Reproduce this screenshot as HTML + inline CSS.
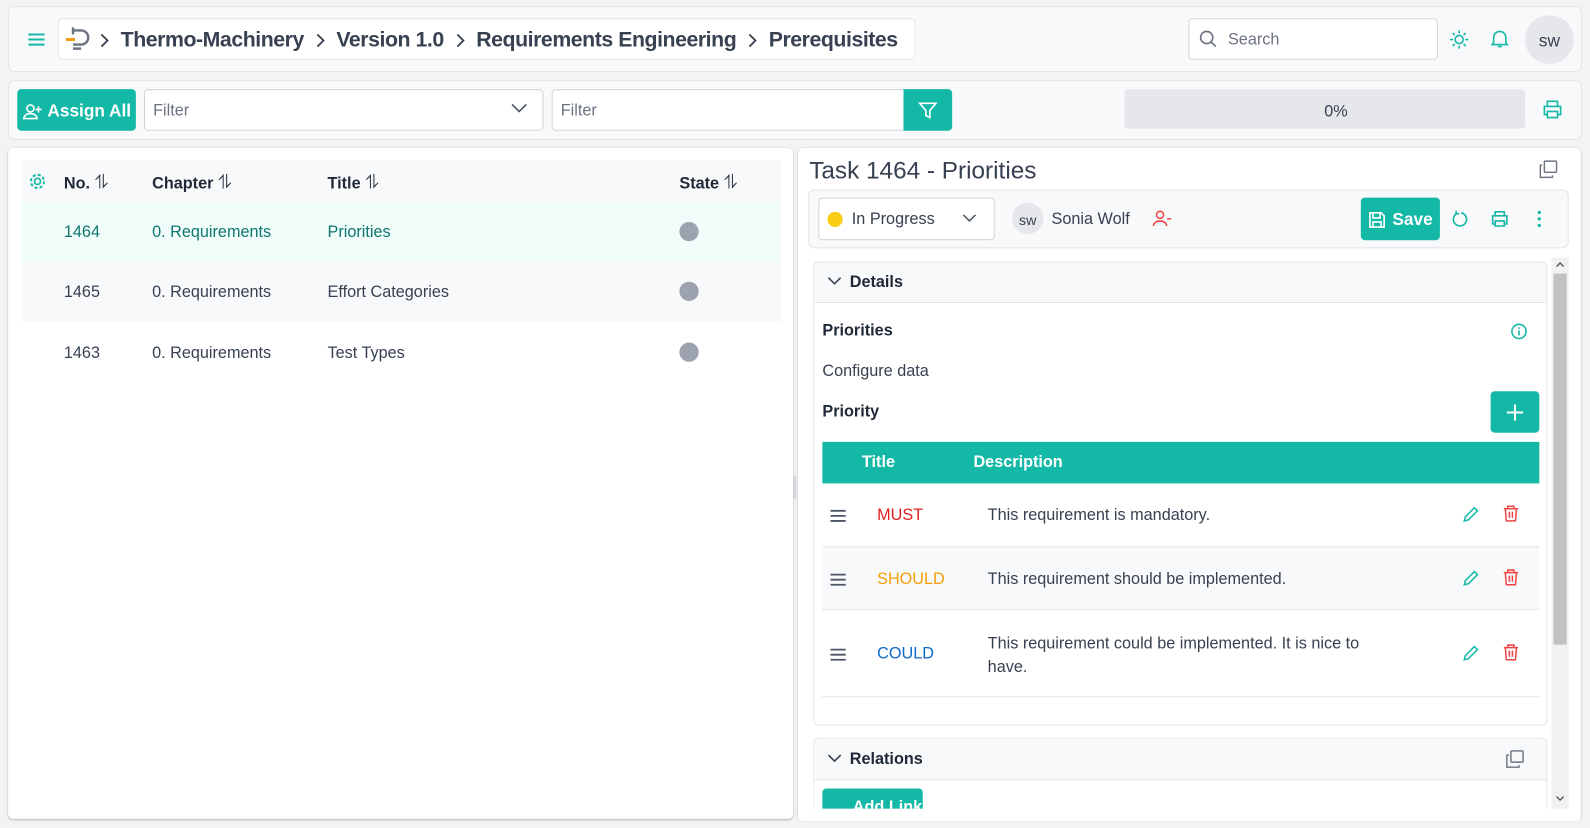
<!DOCTYPE html>
<html><head><meta charset="utf-8"><style>
*{box-sizing:border-box;margin:0;padding:0}
html,body{width:1590px;height:828px;overflow:hidden;background:#f2f3f5}
body{font-family:"Liberation Sans",sans-serif;color:#374151}
#w{position:absolute;left:0;top:0;width:1568px;height:817px;transform:scale(1.01403,1.01346);transform-origin:0 0}
.a{position:absolute}
.card{position:absolute;background:#f8f9fa;border:1px solid #e3e5e8;border-radius:6px}
.inp{position:absolute;background:#fff;border:1px solid #d1d5db;border-radius:4px;color:#6b7280;font-size:16px;padding-left:8px;padding-top:2px;display:flex;align-items:center}
.btn{position:absolute;background:#14b8a6;color:#fff;border-radius:4px;font-weight:bold;display:flex;align-items:center;justify-content:center}
.th{font-weight:bold;font-size:16px;color:#1f2937}
.td{font-size:16px;color:#374151}
.srt{font-weight:normal;font-size:19px}
svg{display:block}
.bcw{position:absolute;left:98px;top:25px;height:30px;display:flex;align-items:center;gap:11px;font-size:21px;font-weight:bold;color:#374151;white-space:nowrap;letter-spacing:-0.45px}
</style></head><body><div id="w">
<div class="card" style="left:8px;top:6px;width:1552px;height:65px"></div>
<svg class="a" style="left:27px;top:31px" width="18" height="16"><path d="M1 3h16M1 8h16M1 13h16" stroke="#14b8a6" stroke-width="2"/></svg>
<div class="a" style="left:57px;top:18px;width:846px;height:41px;background:#fff;border:1px solid #e3e5e8;border-radius:5px"></div>
<svg class="a" style="left:63px;top:26px" width="26" height="26"><path d="M9 4h8a7 7 0 0 1 0 14H9M9 22h8" stroke="#6b7280" stroke-width="2.4" fill="none"/><path d="M9 1v7" stroke="#6b7280" stroke-width="2.4"/><path d="M2 13h9" stroke="#f59e0b" stroke-width="3"/></svg>
<div class="bcw">
<svg width="10" height="16"><path d="M2 2l6 6-6 6" stroke="#374151" stroke-width="1.8" fill="none"/></svg><span>Thermo-Machinery</span>
<svg width="10" height="16"><path d="M2 2l6 6-6 6" stroke="#374151" stroke-width="1.8" fill="none"/></svg><span>Version 1.0</span>
<svg width="10" height="16"><path d="M2 2l6 6-6 6" stroke="#374151" stroke-width="1.8" fill="none"/></svg><span>Requirements Engineering</span>
<svg width="10" height="16"><path d="M2 2l6 6-6 6" stroke="#374151" stroke-width="1.8" fill="none"/></svg><span>Prerequisites</span>
</div>
<div class="inp" style="left:1172px;top:18px;width:246px;height:41px;padding-left:38px">Search</div>
<svg class="a" style="left:1182px;top:29px" width="20" height="20"><circle cx="8" cy="8" r="6" stroke="#6b7280" stroke-width="1.6" fill="none"/><path d="M12.5 12.5L17 17" stroke="#6b7280" stroke-width="1.6"/></svg>
<svg class="a" style="left:1429px;top:29px" width="20" height="20"><circle cx="10" cy="10" r="4" stroke="#14b8a6" stroke-width="1.6" fill="none"/><path d="M10 1v3M10 16v3M1 10h3M16 10h3M3.6 3.6l2 2M14.4 14.4l2 2M3.6 16.4l2-2M14.4 5.6l2-2" stroke="#14b8a6" stroke-width="1.6"/></svg>
<svg class="a" style="left:1469px;top:28px" width="20" height="20"><path d="M4 14V9a6 6 0 0 1 12 0v5l1.5 2h-15zM8 18h4" stroke="#14b8a6" stroke-width="1.6" fill="none"/></svg>
<div class="a" style="left:1504px;top:15px;width:48px;height:48px;border-radius:50%;background:#e5e7eb;display:flex;align-items:center;justify-content:center;font-size:17px;color:#374151;padding-top:3px">sw</div>
<div class="card" style="left:8px;top:79px;width:1552px;height:59px"></div>
<div class="btn" style="left:17px;top:88px;width:117px;height:41px;font-size:17px;padding-top:2px"><svg width="20" height="18" style="margin-right:5px"><circle cx="8" cy="6" r="3.5" stroke="#fff" stroke-width="1.6" fill="none"/><path d="M1.5 16a6.5 5 0 0 1 13 0zM16 4v6M13 7h6" stroke="#fff" stroke-width="1.6" fill="none"/></svg>Assign All</div>
<div class="inp" style="left:142px;top:88px;width:394px;height:41px">Filter</div>
<svg class="a" style="left:503px;top:101px" width="18" height="12"><path d="M2 2l7 7 7-7" stroke="#4b5563" stroke-width="1.6" fill="none"/></svg>
<div class="inp" style="left:544px;top:88px;width:350px;height:41px">Filter</div>
<div class="btn" style="left:891px;top:88px;width:48px;height:41px;border-radius:0 4px 4px 0"><svg width="20" height="20"><path d="M2 3h16l-6 7v7l-4-2v-5z" stroke="#fff" stroke-width="1.6" fill="none"/></svg></div>
<div class="a" style="left:1109px;top:88px;width:395px;height:39px;background:#e5e7eb;border-radius:4px;display:flex;align-items:center;justify-content:center;font-size:16px;color:#374151;padding-top:6px;padding-left:22px">0%</div>
<svg class="a" style="left:1521px;top:98px" width="20" height="20"><path d="M5 7V2h10v5M5 15H2V7h16v8h-3M5 12h10v6H5z" stroke="#14b8a6" stroke-width="1.6" fill="none"/></svg>
<div class="a" style="left:8px;top:146px;width:774px;height:662px;background:#fff;border-radius:5px;box-shadow:0 1px 2px rgba(0,0,0,.25)"></div>
<div class="a" style="left:21px;top:158px;width:749px;height:42px;background:#f8f9fa"></div>
<svg class="a" style="left:28px;top:170px" width="18" height="18"><circle cx="9" cy="9" r="3" stroke="#14b8a6" stroke-width="1.6" fill="none"/><circle cx="9" cy="9" r="6.5" stroke="#14b8a6" stroke-width="2" stroke-dasharray="3 2.1" fill="none"/></svg>
<div class="a th" style="left:63px;top:170px">No. <span class="srt">⥮</span></div>
<div class="a th" style="left:150px;top:170px">Chapter <span class="srt">⥮</span></div>
<div class="a th" style="left:323px;top:170px">Title <span class="srt">⥮</span></div>
<div class="a th" style="left:670px;top:170px">State <span class="srt">⥮</span></div>
<div class="a" style="left:21px;top:200px;width:749px;height:59px;background:#f0fdfa"></div>
<div class="a" style="left:21px;top:259px;width:749px;height:59px;background:#f8f9fa"></div>
<div class="a td" style="left:63px;top:221px;color:#0f766e">1464</div><div class="a td" style="left:150px;top:221px;color:#0f766e">0. Requirements</div><div class="a td" style="left:323px;top:221px;color:#0f766e">Priorities</div>
<div class="a td" style="left:63px;top:280px">1465</div><div class="a td" style="left:150px;top:280px">0. Requirements</div><div class="a td" style="left:323px;top:280px">Effort Categories</div>
<div class="a td" style="left:63px;top:340px">1463</div><div class="a td" style="left:150px;top:340px">0. Requirements</div><div class="a td" style="left:323px;top:340px">Test Types</div>
<div class="a" style="left:670px;top:219px;width:19px;height:19px;border-radius:50%;background:#9ca3af"></div>
<div class="a" style="left:670px;top:278px;width:19px;height:19px;border-radius:50%;background:#9ca3af"></div>
<div class="a" style="left:670px;top:338px;width:19px;height:19px;border-radius:50%;background:#9ca3af"></div>
<div class="a" style="left:782px;top:470px;width:3px;height:22px;background:#d1d5db"></div>
<div class="a" style="left:787px;top:146px;width:772px;height:662px;background:#fff;border-radius:5px;box-shadow:0 1px 2px rgba(0,0,0,.25)"></div>
<div class="a" style="left:798px;top:155px;font-size:24px;color:#374151">Task 1464 - Priorities</div>
<svg class="a" style="left:1518px;top:158px" width="18" height="18"><rect x="5" y="1" width="12" height="11" stroke="#6b7280" stroke-width="1.4" fill="none" rx="1"/><path d="M3 5H1v12h12v-2" stroke="#6b7280" stroke-width="1.4" fill="none"/></svg>
<div class="card" style="left:797px;top:187px;width:750px;height:58px"></div>
<div class="inp" style="left:807px;top:195px;width:174px;height:42px;color:#374151;padding-left:32px">In Progress</div>
<div class="a" style="left:816px;top:209px;width:15px;height:15px;border-radius:50%;background:#facc15"></div>
<svg class="a" style="left:948px;top:210px" width="16" height="12"><path d="M2 2l6 6 6-6" stroke="#4b5563" stroke-width="1.5" fill="none"/></svg>
<div class="a" style="left:998px;top:200px;width:31px;height:31px;border-radius:50%;background:#e5e7eb;display:flex;align-items:center;justify-content:center;font-size:14px;padding-top:2px">sw</div>
<div class="a td" style="left:1037px;top:208px">Sonia Wolf</div>
<svg class="a" style="left:1136px;top:207px" width="20" height="18"><circle cx="8" cy="5" r="3.5" stroke="#ef4444" stroke-width="1.5" fill="none"/><path d="M1.5 16a6.5 5 0 0 1 13 0M15 9h4" stroke="#ef4444" stroke-width="1.5" fill="none"/></svg>
<div class="btn" style="left:1342px;top:195px;width:78px;height:42px;font-size:17px;padding-top:2px"><svg width="18" height="18" style="margin-right:6px"><path d="M2 2h11l3 3v11H2zM5 2v5h7V2M5 16v-5h8v5" stroke="#fff" stroke-width="1.6" fill="none"/></svg>Save</div>
<svg class="a" style="left:1431px;top:207px" width="18" height="18"><path d="M6 3.5A6.5 6.5 0 1 0 10 3M5 1v3h3" stroke="#14b8a6" stroke-width="1.6" fill="none"/></svg>
<svg class="a" style="left:1470px;top:207px" width="18" height="18"><path d="M4.5 6V2h9v4M4.5 14H2V6h14v8h-2.5M4.5 11h9v5h-9z" stroke="#14b8a6" stroke-width="1.6" fill="none"/></svg>
<svg class="a" style="left:1515px;top:207px" width="6" height="18"><circle cx="3" cy="2.5" r="1.6" fill="#14b8a6"/><circle cx="3" cy="9" r="1.6" fill="#14b8a6"/><circle cx="3" cy="15.5" r="1.6" fill="#14b8a6"/></svg>
<div class="a" style="left:1530px;top:254px;width:17px;height:544px;background:#f1f1f1"></div>
<div class="a" style="left:1532px;top:270px;width:13px;height:366px;background:#c1c1c1"></div>
<svg class="a" style="left:1534px;top:258px" width="9" height="6"><path d="M1 5l3.5-3.5L8 5" stroke="#505050" stroke-width="1.3" fill="none"/></svg>
<svg class="a" style="left:1534px;top:785px" width="9" height="6"><path d="M1 1l3.5 3.5L8 1" stroke="#505050" stroke-width="1.3" fill="none"/></svg>
<div class="a" style="left:802px;top:258px;width:724px;height:458px;background:#fff;border:1px solid #e3e5e8;border-radius:5px"></div>
<div class="a" style="left:803px;top:259px;width:722px;height:40px;background:#f8f9fa;border-bottom:1px solid #e3e5e8;border-radius:5px 5px 0 0"></div>
<svg class="a" style="left:815px;top:272px" width="16" height="12"><path d="M2 2l6 6 6-6" stroke="#374151" stroke-width="1.6" fill="none"/></svg>
<div class="a th" style="left:838px;top:270px">Details</div>
<div class="a th" style="left:811px;top:318px">Priorities</div>
<svg class="a" style="left:1489px;top:318px" width="18" height="18"><circle cx="9" cy="9" r="7" stroke="#14b8a6" stroke-width="1.5" fill="none"/><path d="M9 8v5M9 5v1.5" stroke="#14b8a6" stroke-width="1.6"/></svg>
<div class="a td" style="left:811px;top:358px">Configure data</div>
<div class="a th" style="left:811px;top:398px">Priority</div>
<div class="btn" style="left:1470px;top:386px;width:48px;height:41px"><svg width="18" height="18"><path d="M9 1v16M1 9h16" stroke="#fff" stroke-width="2"/></svg></div>
<div class="a" style="left:811px;top:436px;width:707px;height:41px;background:#14b8a6"></div>
<div class="a" style="left:850px;top:448px;font-size:16px;font-weight:bold;color:#fff">Title</div>
<div class="a" style="left:960px;top:448px;font-size:16px;font-weight:bold;color:#fff">Description</div>
<div class="a" style="left:811px;top:539px;width:707px;height:63px;background:#f8f9fa;border-top:1px solid #e3e5e8;border-bottom:1px solid #e3e5e8"></div>
<div class="a" style="left:811px;top:687px;width:707px;height:1px;background:#e3e5e8"></div>
<div class="a td" style="left:865px;top:500px;color:#e11d1d">MUST</div>
<div class="a td" style="left:865px;top:563px;color:#f59e0b">SHOULD</div>
<div class="a td" style="left:865px;top:637px;color:#0b6bcb">COULD</div>
<div class="a td" style="left:974px;top:500px">This requirement is mandatory.</div>
<div class="a td" style="left:974px;top:563px">This requirement should be implemented.</div>
<div class="a td" style="left:974px;top:624px;width:395px;line-height:23px">This requirement could be implemented. It is nice to have.</div>
<svg width="0" height="0" style="position:absolute"><defs>
<g id="hb"><path d="M1 2h15M1 7h15M1 12h15" stroke="#4b5563" stroke-width="1.8"/></g>
<g id="pen"><path d="M12 2l3 3-9 9-4 1 1-4z" stroke="#14b8a6" stroke-width="1.5" fill="none"/></g>
<g id="tr"><path d="M2 4h14M6 4V1.5h6V4M3.5 4l1 12h9l1-12M7.5 7v6M10.5 7v6" stroke="#ef4444" stroke-width="1.5" fill="none"/></g>
</defs></svg>
<svg class="a" style="left:818px;top:502px" width="17" height="15"><use href="#hb"/></svg>
<svg class="a" style="left:818px;top:565px" width="17" height="15"><use href="#hb"/></svg>
<svg class="a" style="left:818px;top:639px" width="17" height="15"><use href="#hb"/></svg>
<svg class="a" style="left:1442px;top:499px" width="18" height="18"><use href="#pen"/></svg>
<svg class="a" style="left:1442px;top:562px" width="18" height="18"><use href="#pen"/></svg>
<svg class="a" style="left:1442px;top:636px" width="18" height="18"><use href="#pen"/></svg>
<svg class="a" style="left:1481px;top:498px" width="18" height="18"><use href="#tr"/></svg>
<svg class="a" style="left:1481px;top:561px" width="18" height="18"><use href="#tr"/></svg>
<svg class="a" style="left:1481px;top:635px" width="18" height="18"><use href="#tr"/></svg>
<div class="a" style="left:802px;top:728px;width:724px;height:80px;background:#fff;border:1px solid #e3e5e8;border-bottom:none;border-radius:5px 5px 0 0;overflow:hidden">
<div style="height:41px;background:#f8f9fa;border-bottom:1px solid #e3e5e8"></div></div>
<svg class="a" style="left:815px;top:743px" width="16" height="12"><path d="M2 2l6 6 6-6" stroke="#374151" stroke-width="1.6" fill="none"/></svg>
<div class="a th" style="left:838px;top:741px">Relations</div>
<svg class="a" style="left:1485px;top:740px" width="18" height="18"><rect x="5" y="1" width="12" height="11" stroke="#6b7280" stroke-width="1.4" fill="none" rx="1"/><path d="M3 5H1v12h12v-2" stroke="#6b7280" stroke-width="1.4" fill="none"/></svg>
<div class="a" style="left:811px;top:778px;width:99px;height:20px;background:#14b8a6;border-radius:4px 4px 0 0;overflow:hidden;color:#fff;font-weight:bold;font-size:16px;padding:10px 0 0 30px">Add Link</div>
<div class="a" style="left:787px;top:798px;width:772px;height:12px;background:#fff;border-radius:0 0 5px 5px"></div>
</div></body></html>
